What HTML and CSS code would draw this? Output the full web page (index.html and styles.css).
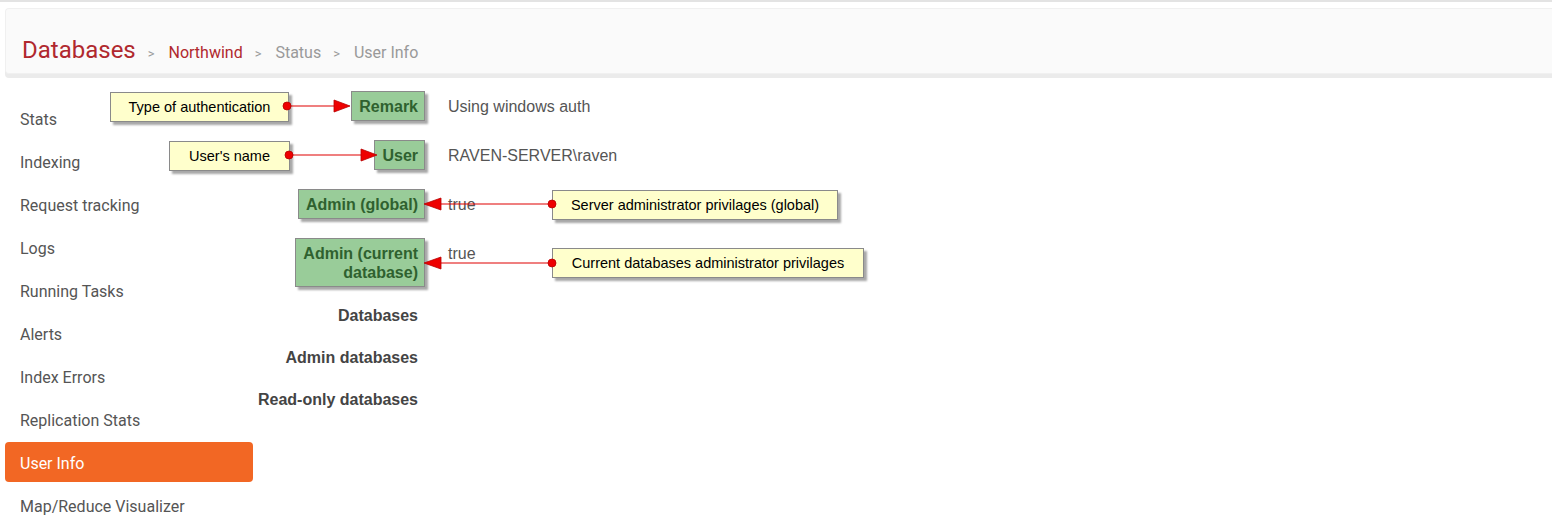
FILE: index.html
```html
<!DOCTYPE html>
<html lang="en">
<head>
	<meta charset="UTF-8">
	<title>User Info</title>
	<link rel="stylesheet" href="styles.css">
</head>
<body>
	<div class="topline"></div>
	<div class="header">
		<span class="title">Databases</span>
		<span class="sep">&gt;</span>
		<span class="crumb crumb-db">Northwind</span>
		<span class="sep">&gt;</span>
		<span class="crumb">Status</span>
		<span class="sep">&gt;</span>
		<span class="crumb">User Info</span>
	</div>
	<div class="main">
		<ul class="sidebar">
			<li>Stats</li>
			<li>Indexing</li>
			<li>Request tracking</li>
			<li>Logs</li>
			<li>Running Tasks</li>
			<li>Alerts</li>
			<li>Index Errors</li>
			<li>Replication Stats</li>
			<li class="active">User Info</li>
			<li>Map/Reduce Visualizer</li>
		</ul>
		<dl class="info">
			<div class="row hl">
				<dt><span>Remark</span></dt>
				<dd>Using windows auth</dd>
			</div>
			<div class="row hl">
				<dt><span>User</span></dt>
				<dd>RAVEN-SERVER\raven</dd>
			</div>
			<div class="row hl">
				<dt><span>Admin (global)</span></dt>
				<dd>true</dd>
			</div>
			<div class="row hl">
				<dt><span>Admin (current<br>database)</span></dt>
				<dd>true</dd>
			</div>
			<div class="row">
				<dt>Databases</dt>
				<dd></dd>
			</div>
			<div class="row">
				<dt>Admin databases</dt>
				<dd></dd>
			</div>
			<div class="row">
				<dt>Read-only databases</dt>
				<dd></dd>
			</div>
		</dl>
	</div>

	<!-- annotation layer -->
	<div class="notes">
		<div class="note note-auth">Type of authentication</div>
		<div class="note note-user">User's name</div>
		<div class="note note-global">Server administrator privilages (global)</div>
		<div class="note note-current">Current databases administrator privilages</div>
		<svg class="arrows" width="1552" height="526" viewBox="0 0 1552 526">
			<g stroke="#e00000" stroke-width="1.2">
				<line x1="287" y1="106" x2="335" y2="106"/>
				<line x1="289" y1="155" x2="362" y2="155"/>
				<line x1="552" y1="204" x2="440" y2="204"/>
				<line x1="552" y1="263" x2="440" y2="263"/>
			</g>
			<g fill="#ee0000" stroke="#b80000" stroke-width="0.8">
				<polygon points="334,100 350,106 334,112"/>
				<polygon points="361,149 377,155 361,161"/>
				<polygon points="441,198 424,204 441,210"/>
				<polygon points="441,257 424,263 441,269"/>
				<circle cx="287" cy="106" r="4"/>
				<circle cx="289" cy="155" r="4"/>
				<circle cx="552" cy="204" r="4"/>
				<circle cx="552" cy="263" r="4"/>
			</g>
		</svg>
	</div>
</body>
</html>
```

FILE: styles.css
```css
*{
	margin:0;
	padding:0;
	box-sizing: border-box;
}
body{
	font-family: Roboto, "Liberation Sans", sans-serif;
	background: #fff;
	color: #555;
}
.topline{
	height: 2px;
	background: #e3e3e3;
}
.header{
	margin: 6px 0 0 5px;
	height: 66px;
	padding: 27px 16px 0;
	background: #fafafa;
	border: 1px solid #f0f0f0;
	border-right: none;
	border-radius: 4px 0 0 4px;
	box-shadow: 0 4px 0 #ebebeb;
	white-space: nowrap;
}
.title{
	font-size: 24px;
	line-height: 28px;
	color: #b0282e;
}
.sep{
	font-size: 13px;
	color: #999;
	margin: 0 10px 0 8px;
}
.crumb{
	font-size: 16px;
	color: #999;
}
.crumb-db{
	color: #b0282e;
}
.main{
	display: flex;
}
.sidebar{
	list-style: none;
	width: 248px;
	margin-left: 5px;
	padding-top: 24px;
	flex-shrink: 0;
}
.sidebar li{
	height: 40px;
	padding: 4px 0 0 15px;
	line-height: 36px;
	margin-bottom: 3px;
	font-size: 16px;
	color: #555;
	border-radius: 4px;
}
.sidebar li.active{
	background: #f26724;
	color: #fff;
}
.info{
	margin-left: 5px;
	padding-top: 17px;
	font-family: "Liberation Sans", Arial, sans-serif;
	font-size: 16px;
}
.row{
	display: grid;
	grid-template-columns: 160px auto;
	column-gap: 30px;
	margin-bottom: 22px;
	line-height: 20px;
}
.row dt{
	text-align: right;
	font-weight: bold;
	color: #444;
	white-space: nowrap;
	direction: rtl;
}
.row dd{
	color: #555;
	white-space: nowrap;
}
.row.hl{
	margin-bottom: 19px;
}
.row.hl dt span{
	display: inline-block;
	direction: ltr;
	margin-right: -7px;
	padding: 5px 6px 4px 7px;
	line-height: 19px;
	background: #99cc99;
	color: #2f612f;
	border: 1px solid #8a8a8a;
	box-shadow: 3px 3px 2px #a8a8a8;
}
.row.hl dd{
	padding-top: 6px;
	line-height: 19px;
}
.notes{
	position: absolute;
	left: 0;
	top: 0;
	width: 1552px;
	height: 526px;
	pointer-events: none;
}
.arrows{
	position: absolute;
	left: 0;
	top: 0;
}
.note{
	position: absolute;
	height: 30px;
	line-height: 28px;
	text-align: center;
	font-family: "Liberation Sans", Arial, sans-serif;
	font-size: 14.5px;
	color: #000;
	background: #ffffcc;
	border: 1px solid #8a8a8a;
	box-shadow: 3px 3px 2px #a8a8a8;
	white-space: nowrap;
}
.note-auth{
	left: 110px;
	top: 92px;
	width: 179px;
}
.note-user{
	left: 169px;
	top: 141px;
	width: 121px;
}
.note-global{
	left: 552px;
	top: 190px;
	width: 286px;
}
.note-current{
	left: 552px;
	top: 248px;
	width: 312px;
}
```
